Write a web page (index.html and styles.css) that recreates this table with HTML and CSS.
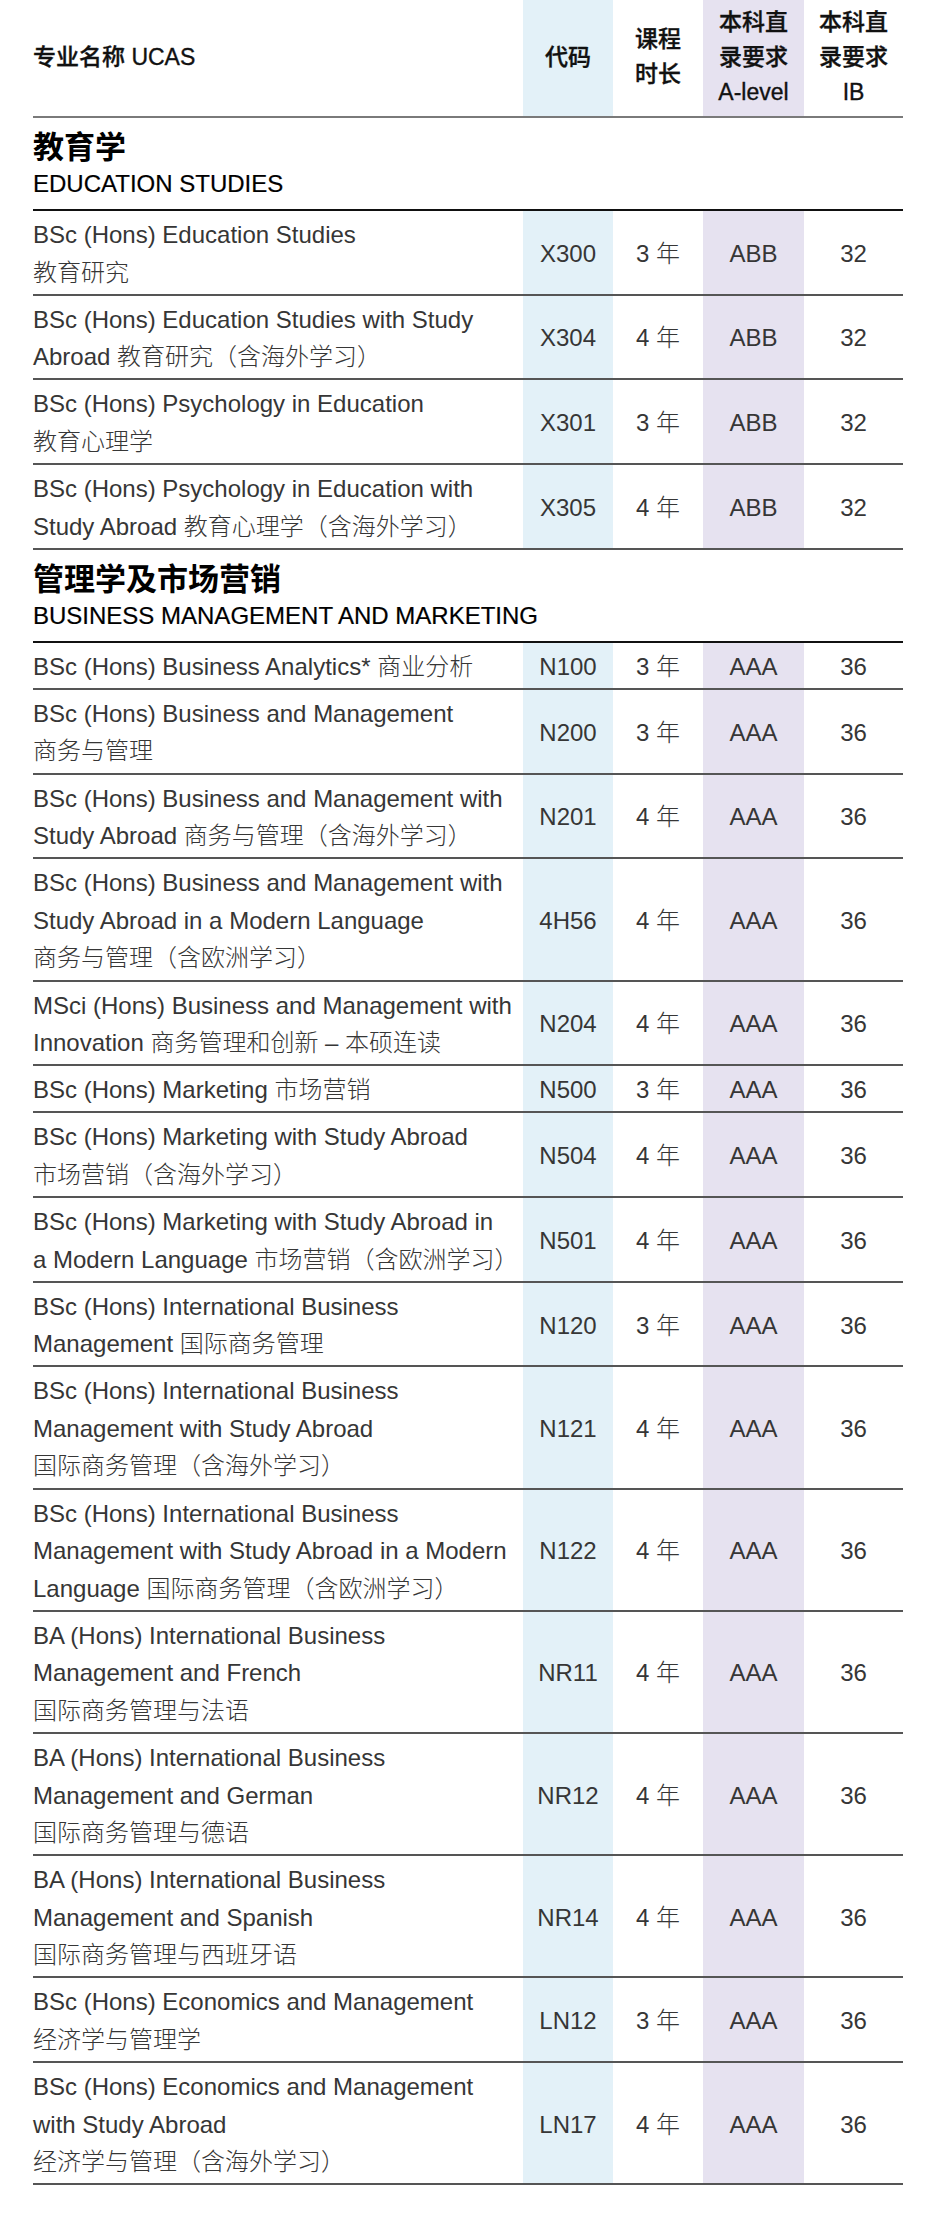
FILE: index.html
```html
<!DOCTYPE html>
<html lang="zh-CN">
<head>
<meta charset="utf-8">
<title>专业列表</title>
<link rel="stylesheet" href="styles.css">
</head>
<body>
<div class="sheet">
  <div class="row head">
    <div class="cell name">专业名称 UCAS</div>
    <div class="cell code">代码</div>
    <div class="cell dur">课程<br>时长</div>
    <div class="cell alv">本科直<br>录要求<br>A-level</div>
    <div class="cell ib">本科直<br>录要求<br>IB</div>
  </div>

  <div class="section">
    <div class="sec-cn">教育学</div>
    <div class="sec-en">EDUCATION STUDIES</div>
  </div>

  <div class="row"><div class="cell name">BSc (Hons) Education Studies<br>教育研究</div><div class="cell code">X300</div><div class="cell dur">3 年</div><div class="cell alv">ABB</div><div class="cell ib">32</div></div>
  <div class="row"><div class="cell name">BSc (Hons) Education Studies with Study<br>Abroad 教育研究（含海外学习）</div><div class="cell code">X304</div><div class="cell dur">4 年</div><div class="cell alv">ABB</div><div class="cell ib">32</div></div>
  <div class="row"><div class="cell name">BSc (Hons) Psychology in Education<br>教育心理学</div><div class="cell code">X301</div><div class="cell dur">3 年</div><div class="cell alv">ABB</div><div class="cell ib">32</div></div>
  <div class="row"><div class="cell name">BSc (Hons) Psychology in Education with<br>Study Abroad 教育心理学（含海外学习）</div><div class="cell code">X305</div><div class="cell dur">4 年</div><div class="cell alv">ABB</div><div class="cell ib">32</div></div>

  <div class="section">
    <div class="sec-cn">管理学及市场营销</div>
    <div class="sec-en">BUSINESS MANAGEMENT AND MARKETING</div>
  </div>

  <div class="row"><div class="cell name">BSc (Hons) Business Analytics* 商业分析</div><div class="cell code">N100</div><div class="cell dur">3 年</div><div class="cell alv">AAA</div><div class="cell ib">36</div></div>
  <div class="row"><div class="cell name">BSc (Hons) Business and Management<br>商务与管理</div><div class="cell code">N200</div><div class="cell dur">3 年</div><div class="cell alv">AAA</div><div class="cell ib">36</div></div>
  <div class="row"><div class="cell name">BSc (Hons) Business and Management with<br>Study Abroad 商务与管理（含海外学习）</div><div class="cell code">N201</div><div class="cell dur">4 年</div><div class="cell alv">AAA</div><div class="cell ib">36</div></div>
  <div class="row"><div class="cell name">BSc (Hons) Business and Management with<br>Study Abroad in a Modern Language<br>商务与管理（含欧洲学习）</div><div class="cell code">4H56</div><div class="cell dur">4 年</div><div class="cell alv">AAA</div><div class="cell ib">36</div></div>
  <div class="row"><div class="cell name">MSci (Hons) Business and Management with<br>Innovation 商务管理和创新 – 本硕连读</div><div class="cell code">N204</div><div class="cell dur">4 年</div><div class="cell alv">AAA</div><div class="cell ib">36</div></div>
  <div class="row"><div class="cell name">BSc (Hons) Marketing 市场营销</div><div class="cell code">N500</div><div class="cell dur">3 年</div><div class="cell alv">AAA</div><div class="cell ib">36</div></div>
  <div class="row"><div class="cell name">BSc (Hons) Marketing with Study Abroad<br>市场营销（含海外学习）</div><div class="cell code">N504</div><div class="cell dur">4 年</div><div class="cell alv">AAA</div><div class="cell ib">36</div></div>
  <div class="row"><div class="cell name">BSc (Hons) Marketing with Study Abroad in<br>a Modern Language 市场营销（含欧洲学习）</div><div class="cell code">N501</div><div class="cell dur">4 年</div><div class="cell alv">AAA</div><div class="cell ib">36</div></div>
  <div class="row"><div class="cell name">BSc (Hons) International Business<br>Management 国际商务管理</div><div class="cell code">N120</div><div class="cell dur">3 年</div><div class="cell alv">AAA</div><div class="cell ib">36</div></div>
  <div class="row"><div class="cell name">BSc (Hons) International Business<br>Management with Study Abroad<br>国际商务管理（含海外学习）</div><div class="cell code">N121</div><div class="cell dur">4 年</div><div class="cell alv">AAA</div><div class="cell ib">36</div></div>
  <div class="row"><div class="cell name">BSc (Hons) International Business<br>Management with Study Abroad in a Modern<br>Language 国际商务管理（含欧洲学习）</div><div class="cell code">N122</div><div class="cell dur">4 年</div><div class="cell alv">AAA</div><div class="cell ib">36</div></div>
  <div class="row"><div class="cell name">BA (Hons) International Business<br>Management and French<br>国际商务管理与法语</div><div class="cell code">NR11</div><div class="cell dur">4 年</div><div class="cell alv">AAA</div><div class="cell ib">36</div></div>
  <div class="row"><div class="cell name">BA (Hons) International Business<br>Management and German<br>国际商务管理与德语</div><div class="cell code">NR12</div><div class="cell dur">4 年</div><div class="cell alv">AAA</div><div class="cell ib">36</div></div>
  <div class="row"><div class="cell name">BA (Hons) International Business<br>Management and Spanish<br>国际商务管理与西班牙语</div><div class="cell code">NR14</div><div class="cell dur">4 年</div><div class="cell alv">AAA</div><div class="cell ib">36</div></div>
  <div class="row"><div class="cell name">BSc (Hons) Economics and Management<br>经济学与管理学</div><div class="cell code">LN12</div><div class="cell dur">3 年</div><div class="cell alv">AAA</div><div class="cell ib">36</div></div>
  <div class="row"><div class="cell name">BSc (Hons) Economics and Management<br>with Study Abroad<br>经济学与管理（含海外学习）</div><div class="cell code">LN17</div><div class="cell dur">4 年</div><div class="cell alv">AAA</div><div class="cell ib">36</div></div>
</div>
</body>
</html>
```
FILE: styles.css
```css
html, body {
  margin: 0;
  padding: 0;
  background: #ffffff;
}
body {
  font-family: "Liberation Sans", "Noto Sans CJK SC", sans-serif;
  color: #363636;
  font-weight: 300;
  font-size: 24px;
}
.sheet {
  width: 870px;
  margin-left: 33px;
  padding-bottom: 49px;
}
.row {
  display: grid;
  grid-template-columns: 490px 90px 90px 101px 99px;
  border-bottom: 2px solid #555555;
}
.cell {
  display: flex;
  align-items: center;
  justify-content: center;
  text-align: center;
  line-height: 37.5px;
  padding: 5px 0 2.7px;
  white-space: nowrap;
}
.cell.name {
  justify-content: flex-start;
  text-align: left;
}
.code {
  background: #e3f1f8;
}
.alv {
  background: #e6e2f0;
}
.head {
  border-bottom: 2px solid #7a7a7a;
  height: 118px;
  box-sizing: border-box;
}
.head .cell {
  font-weight: 500;
  color: #111111;
  font-size: 23px;
  line-height: 35px;
  padding: 0 0 2px;
  -webkit-text-stroke: 0.35px #111111;
}
.section {
  border-bottom: 2px solid #111111;
  padding: 10px 0 9px;
  color: #000000;
}
.sec-cn {
  font-size: 31px;
  font-weight: 700;
  line-height: 40px;
}
.sec-en {
  font-size: 24px;
  font-weight: 400;
  line-height: 32px;
  -webkit-text-stroke: 0.2px #000000;
}
```
